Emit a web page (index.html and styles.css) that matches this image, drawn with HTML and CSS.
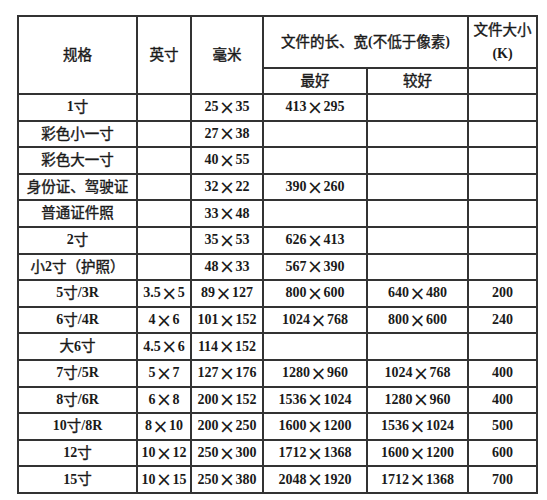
FILE: index.html
```html
<!DOCTYPE html>
<html lang="zh-CN">
<head>
<meta charset="utf-8">
<title>照片规格对照表</title>
<link rel="stylesheet" href="styles.css">
</head>
<body>
<div class="sheet">
  <div class="c hd span-r">规格</div>
  <div class="c hd span-r">英寸</div>
  <div class="c hd span-r">毫米</div>
  <div class="c hd span-c">文件的长、宽<span class="n">(</span>不低于像素<span class="n">)</span></div>
  <div class="c hd two"><span>文件大小</span><span class="n">(K)</span></div>
  <div class="c hd">最好</div>
  <div class="c hd">较好</div>
  <div class="c"></div>

  <div class="c"><span class="n">1</span>寸</div><div class="c"></div><div class="c n">25<span class="x">×</span>35</div><div class="c n">413<span class="x">×</span>295</div><div class="c"></div><div class="c"></div>
  <div class="c">彩色小一寸</div><div class="c"></div><div class="c n">27<span class="x">×</span>38</div><div class="c"></div><div class="c"></div><div class="c"></div>
  <div class="c">彩色大一寸</div><div class="c"></div><div class="c n">40<span class="x">×</span>55</div><div class="c"></div><div class="c"></div><div class="c"></div>
  <div class="c">身份证、驾驶证</div><div class="c"></div><div class="c n">32<span class="x">×</span>22</div><div class="c n">390<span class="x">×</span>260</div><div class="c"></div><div class="c"></div>
  <div class="c">普通证件照</div><div class="c"></div><div class="c n">33<span class="x">×</span>48</div><div class="c"></div><div class="c"></div><div class="c"></div>
  <div class="c"><span class="n">2</span>寸</div><div class="c"></div><div class="c n">35<span class="x">×</span>53</div><div class="c n">626<span class="x">×</span>413</div><div class="c"></div><div class="c"></div>
  <div class="c">小<span class="n">2</span>寸（护照）</div><div class="c"></div><div class="c n">48<span class="x">×</span>33</div><div class="c n">567<span class="x">×</span>390</div><div class="c"></div><div class="c"></div>
  <div class="c"><span class="n">5</span>寸<span class="n">/3R</span></div><div class="c n">3.5<span class="x">×</span>5</div><div class="c n">89<span class="x">×</span>127</div><div class="c n">800<span class="x">×</span>600</div><div class="c n">640<span class="x">×</span>480</div><div class="c n">200</div>
  <div class="c"><span class="n">6</span>寸<span class="n">/4R</span></div><div class="c n">4<span class="x">×</span>6</div><div class="c n">101<span class="x">×</span>152</div><div class="c n">1024<span class="x">×</span>768</div><div class="c n">800<span class="x">×</span>600</div><div class="c n">240</div>
  <div class="c">大<span class="n">6</span>寸</div><div class="c n">4.5<span class="x">×</span>6</div><div class="c n">114<span class="x">×</span>152</div><div class="c"></div><div class="c"></div><div class="c"></div>
  <div class="c"><span class="n">7</span>寸<span class="n">/5R</span></div><div class="c n">5<span class="x">×</span>7</div><div class="c n">127<span class="x">×</span>176</div><div class="c n">1280<span class="x">×</span>960</div><div class="c n">1024<span class="x">×</span>768</div><div class="c n">400</div>
  <div class="c"><span class="n">8</span>寸<span class="n">/6R</span></div><div class="c n">6<span class="x">×</span>8</div><div class="c n">200<span class="x">×</span>152</div><div class="c n">1536<span class="x">×</span>1024</div><div class="c n">1280<span class="x">×</span>960</div><div class="c n">400</div>
  <div class="c"><span class="n">10</span>寸<span class="n">/8R</span></div><div class="c n">8<span class="x">×</span>10</div><div class="c n">200<span class="x">×</span>250</div><div class="c n">1600<span class="x">×</span>1200</div><div class="c n">1536<span class="x">×</span>1024</div><div class="c n">500</div>
  <div class="c"><span class="n">12</span>寸</div><div class="c n">10<span class="x">×</span>12</div><div class="c n">250<span class="x">×</span>300</div><div class="c n">1712<span class="x">×</span>1368</div><div class="c n">1600<span class="x">×</span>1200</div><div class="c n">600</div>
  <div class="c"><span class="n">15</span>寸</div><div class="c n">10<span class="x">×</span>15</div><div class="c n">250<span class="x">×</span>380</div><div class="c n">2048<span class="x">×</span>1920</div><div class="c n">1712<span class="x">×</span>1368</div><div class="c n">700</div>
</div>
</body>
</html>
```

FILE: styles.css
```css
html, body {
  margin: 0;
  padding: 0;
  background: #fff;
}

.sheet {
  margin: 15px 0 0 17px;
  display: grid;
  width: max-content;
  grid-template-columns: 119px 54px 72px 104px 101px 69px;
  grid-template-rows: 52px 26px repeat(15, 26.6px);
  border-left: 2px solid #333;
  border-top: 2px solid #333;
  font-family: "Liberation Serif", "Noto Sans CJK SC", serif;
  font-size: 14.5px;
  font-weight: normal;
  color: #1a1a1a;
  -webkit-text-stroke: 0.4px #1a1a1a;
}

.c {
  box-sizing: border-box;
  border-right: 2px solid #333;
  border-bottom: 2px solid #333;
  display: flex;
  align-items: center;
  justify-content: center;
  text-align: center;
  white-space: nowrap;
  line-height: 1;
}

.n {
  font-weight: bold;
  font-size: 14px;
  -webkit-text-stroke: 0;
}

.span-r {
  grid-row: span 2;
}

.span-c {
  grid-column: span 2;
}

.two {
  flex-direction: column;
  line-height: 23px;
}

.x {
  display: inline-block;
  width: 17px;
  font-family: "DejaVu Sans", sans-serif;
  font-weight: normal;
  font-size: 19px;
  line-height: 1;
  text-align: center;
  -webkit-text-stroke: 0;
}
```
